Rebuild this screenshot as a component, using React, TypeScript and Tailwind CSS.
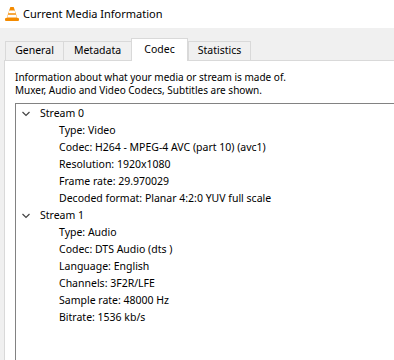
import React from 'react';

const font = { fontFamily: '"Noto Sans", "Open Sans", sans-serif' };

const Chevron: React.FC = () => (
  <svg width="10" height="10" viewBox="0 0 10 10" className="shrink-0">
    <path d="M1.5 3 L5 6.5 L8.5 3" fill="none" stroke="#444" strokeWidth="1.2" />
  </svg>
);

const VlcCone: React.FC = () => (
  <svg width="16" height="16" viewBox="0 0 16 16">
    <path d="M6.3 1 h3.4 l3.6 11 h-10.6z" fill="#f48b00" />
    <path d="M5.4 4.5 h5.2 l0.9 2.8 h-7z" fill="#fff" />
    <path d="M4 8.8 h8 l0.9 2.6 h-9.8z" fill="#fff" />
    <rect x="1" y="12" width="14" height="3" rx="1" fill="#f48b00" />
  </svg>
);

const streams = [
  {
    name: 'Stream 0',
    items: [
      'Type: Video',
      'Codec: H264 - MPEG-4 AVC (part 10) (avc1)',
      'Resolution: 1920x1080',
      'Frame rate: 29.970029',
      'Decoded format: Planar 4:2:0 YUV full scale',
    ],
  },
  {
    name: 'Stream 1',
    items: [
      'Type: Audio',
      'Codec: DTS Audio (dts )',
      'Language: English',
      'Channels: 3F2R/LFE',
      'Sample rate: 48000 Hz',
      'Bitrate: 1536 kb/s',
    ],
  },
];

const tabs = ['General', 'Metadata', 'Codec', 'Statistics'];
const tabWidths: Record<string, string> = {
  General: 'w-[59px]',
  Metadata: 'w-[69px]',
  Codec: 'w-[57px]',
  Statistics: 'w-[63px]',
};

export default function App() {
  return (
    <div className="w-[394px] h-[360px] overflow-hidden bg-[#f0f0f0] text-[10.5px] text-black" style={font}>
      {/* Title bar */}
      <div className="h-[28px] bg-white flex items-center pl-[4px] gap-[3px]">
        <VlcCone />
        <span className="text-[11px]">Current Media Information</span>
      </div>

      <div className="pl-[4px] pt-[10px]">
        {/* Tabs */}
        <div className="flex items-end h-[22px] pl-[1px]">
          {tabs.map((t) =>
            t === 'Codec' ? (
              <div
                key={t}
                className={`${tabWidths[t]} h-[23px] -mb-px bg-white border border-b-0 border-[#d9d9d9] flex items-center justify-center relative z-10`}
              >
                {t}
              </div>
            ) : (
              <div
                key={t}
                className={`${tabWidths[t]} h-[19px] bg-[#f0f0f0] border border-b-0 border-[#d9d9d9] -mr-px flex items-center justify-center`}
              >
                {t}
              </div>
            )
          )}
        </div>

        {/* Panel */}
        <div className="bg-white border-l border-t border-[#d9d9d9] h-[300px] pl-[10px] pt-[10px]">
          <p className="leading-[13px] text-[10px]">Information about what your media or stream is made of.</p>
          <p className="leading-[13px] text-[10px]">Muxer, Audio and Video Codecs, Subtitles are shown.</p>

          <div className="mt-[6px] border-l border-t border-[#828282] h-[300px] pt-px">
            {streams.map((s) => (
              <div key={s.name}>
                <div className="h-[17px] flex items-center pl-[5px] gap-[9px]">
                  <Chevron />
                  <span>{s.name}</span>
                </div>
                {s.items.map((it) => (
                  <div key={it} className="h-[17px] flex items-center pl-[43px] whitespace-nowrap">
                    {it}
                  </div>
                ))}
              </div>
            ))}
          </div>
        </div>
      </div>
    </div>
  );
}
